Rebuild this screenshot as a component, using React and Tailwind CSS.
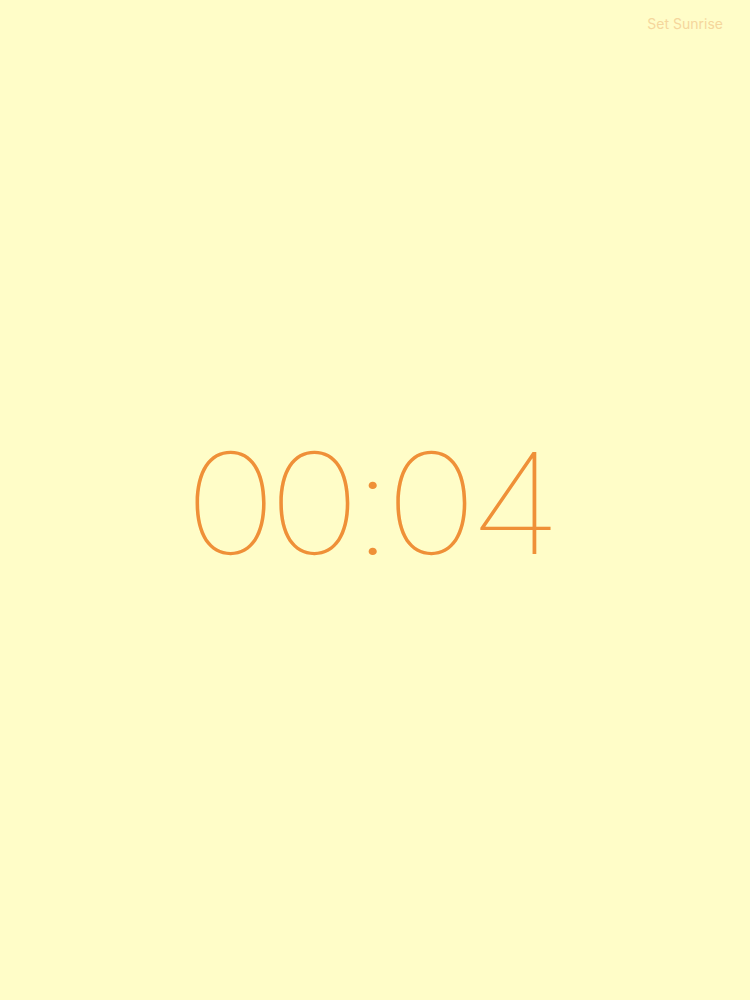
export default function App() {
    return (
        <div className="w-[750px] h-[1000px] bg-[#fffdc8] flex flex-col" style={{ fontFamily: 'Inter, "Liberation Sans", sans-serif' }}>
            <div className="flex justify-end pt-[13px] pr-[27px]">
                <button className="text-[14px] text-[#f5d69c]">Set Sunrise</button>
            </div>
            <div className="flex-1 flex items-center justify-center">
                <div className="text-[140px] font-thin text-[#ef9038] leading-none tracking-[-8px] scale-x-[1.12] mt-[-28px] ml-[-12px]">
                    00:04
                </div>
            </div>
        </div>
    );
}
